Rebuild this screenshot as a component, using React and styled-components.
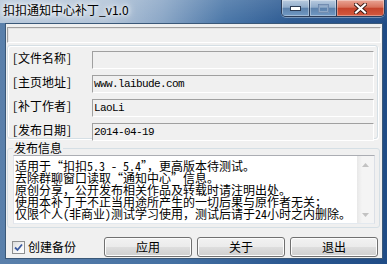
import React from "react";
import styled, { createGlobalStyle } from "styled-components";

const UI = `"Noto Sans CJK SC", "Noto Sans", sans-serif`;

const GlobalStyle = createGlobalStyle`
  html, body { margin: 0; padding: 0; background: #fff; }
  #root { width: 387px; height: 264px; }
  * { box-sizing: border-box; }
`;

const Window = styled.div`
  width: 387px;
  height: 264px;
  display: flex;
  flex-direction: column;
  overflow: hidden;
  font-family: ${UI};
  background: linear-gradient(90deg, #5a80ab 0%, #4470a2 45%, #2a5790 75%, #204c86 100%);
`;

const TitleBar = styled.div`
  flex: none;
  height: 23px;
  display: flex;
  align-items: flex-start;
  justify-content: space-between;
  padding: 0 2px 0 3px;
  background:
    linear-gradient(180deg, rgba(255,255,255,0.12) 0%, rgba(255,255,255,0) 100%),
    linear-gradient(90deg, #b7c8db 0%, #b2c4d8 28%, #8aa6c6 42%, #4b77a8 58%, #2c5a92 75%, #214d87 100%);
`;

const Title = styled.div`
  font-size: 12px;
  line-height: 19px;
  color: #000;
  white-space: nowrap;
  text-shadow: 0 0 4px #fff, 0 0 7px #fff, 0 0 10px rgba(255,255,255,0.9);
`;

const CaptionButtons = styled.div`
  display: flex;
  height: 17px;
  border: 1px solid #2c3e5b;
  border-top: none;
  border-radius: 0 0 5px 5px;
  overflow: hidden;
  box-shadow: 0 1px 0 rgba(255,255,255,0.35);
`;

const CapBtn = styled.div`
  width: ${(p) => (p.$close ? "48px" : "27px")};
  height: 100%;
  display: flex;
  align-items: center;
  justify-content: center;
  border-left: ${(p) => (p.$first ? "none" : "1px solid #2c3e5b")};
  box-shadow: inset 0 0 0 1px rgba(255,255,255,0.35);
  background: ${(p) =>
    p.$close
      ? "linear-gradient(180deg, #e9a595 0%, #d8725c 45%, #c5442c 52%, #d35a40 100%)"
      : "linear-gradient(180deg, #b9cbe0 0%, #91acca 45%, #5d82ac 52%, #7199c4 100%)"};
`;

const Client = styled.div`
  flex: 1;
  margin: 0 4px 5px 5px;
  border: 1px solid #3a5878;
  background: #f0f0f0;
  display: flex;
  flex-direction: column;
  padding: 3px 1px 0 1px;
`;

const TopBar = styled.div`
  height: 16px;
  border: 1px solid;
  border-color: #a0a0a0 #ffffff #ffffff #a0a0a0;
  box-shadow: inset 1px 1px 0 #e3e3e3;
  background: #f0f0f0;
`;

const FieldsGroup = styled.div`
  margin: 2px 3px 0 0;
  height: 94px;
  border: 1px solid #d5dfe5;
  border-radius: 3px;
  box-shadow: inset 1px 1px 0 #fff, 1px 1px 0 #fff;
  padding: 5px 3px 0 4px;
`;

const Row = styled.div`
  display: grid;
  grid-template-columns: 80px 1fr;
  height: 24px;
  align-items: start;
`;

const Label = styled.div`
  font-size: 12px;
  line-height: 13px;
  color: #000;
  white-space: nowrap;
  font-feature-settings: "hwid" 1;
`;

const Field = styled.div`
  height: 18px;
  border: 1px solid;
  border-color: #a0a0a0 #ffffff #ffffff #a0a0a0;
  background: #f0f0f0;
  padding-left: 1px;
  font-family: "Liberation Mono", monospace;
  font-size: 11px;
  letter-spacing: -0.6px;
  line-height: 16px;
  color: #000;
  white-space: nowrap;
`;

const InfoGroup = styled.fieldset`
  margin: 2px 1px 0 0;
  padding: 0 4px 3px 5px;
  border: 1px solid #d5dfe5;
  border-radius: 3px;
  min-width: 0;
`;

const Legend = styled.legend`
  font-size: 12px;
  line-height: 14px;
  padding: 0 1px;
  color: #000;
`;

const TextBox = styled.div`
  height: 69px;
  display: flex;
  border: 1px solid;
  border-color: #abadb3 #dbdfe6 #e3e9ef #e2e3ea;
  background: #fff;
`;

const TextBody = styled.div`
  flex: 1;
  padding: 4px 0 0 1px;
  font-size: 12px;
  line-height: 12px;
  color: #000;
  white-space: pre;
  overflow: hidden;
`;

const TextLine = styled.div`
  height: 12px;
`;

const Run = styled.span`
  font-feature-settings: ${(p) => (p.$kind === "half" ? '"hwid" 1' : p.$kind === "wide" ? '"fwid" 1' : "normal")};
`;

const ScrollBar = styled.div`
  width: 17px;
  display: flex;
  flex-direction: column;
  justify-content: space-between;
  background: linear-gradient(90deg, #e8e8e8 0%, #f4f4f4 30%, #f4f4f4 100%);
`;

const ScrollArrow = styled.div`
  height: 17px;
  display: flex;
  align-items: center;
  justify-content: center;
`;

const BottomRow = styled.div`
  margin-top: 9px;
  height: 20px;
  display: flex;
  align-items: center;
  justify-content: space-between;
  padding: 0 3px 0 5px;
`;

const CheckLabel = styled.label`
  display: flex;
  align-items: center;
  gap: 3px;
  font-size: 12px;
  line-height: 14px;
  color: #000;
`;

const CheckBox = styled.span`
  width: 13px;
  height: 13px;
  border: 1px solid #8e8f8f;
  background: linear-gradient(135deg, #dcdcdc 0%, #f6f6f6 60%, #ffffff 100%);
  display: flex;
  align-items: center;
  justify-content: center;
`;

const Buttons = styled.div`
  display: flex;
  gap: 5px;
`;

const Button = styled.div`
  width: 88px;
  height: 20px;
  border: 1px solid #707070;
  border-radius: 3px;
  box-shadow: inset 0 0 0 1px #fcfcfc;
  background: linear-gradient(180deg, #f2f2f2 0%, #ebebeb 48%, #dddddd 52%, #cfcfcf 100%);
  display: flex;
  align-items: center;
  justify-content: center;
  font-size: 12px;
  line-height: 14px;
  color: #000;
`;

const rows = [
  { label: "[文件名称]", value: "" },
  { label: "[主页地址]", value: "www.laibude.com" },
  { label: "[补丁作者]", value: "LaoLi" },
  { label: "[发布日期]", value: "2014-04-19" },
];

const info = [
  "适用于“扣扣5.3 - 5.4”，更高版本待测试。",
  "去除群聊窗口读取“通知中心”信息。",
  "原创分享，公开发布相关作品及转载时请注明出处。",
  "使用本补丁于不正当用途所产生的一切后果与原作者无关；",
  "仅限个人(非商业)测试学习使用，测试后请于24小时之内删除。",
];

function splitRuns(text) {
  const runs = [];
  for (const ch of text) {
    const kind = /[\x20-\x7e]/.test(ch) ? "half" : ch === "“" || ch === "”" ? "wide" : "cjk";
    const last = runs[runs.length - 1];
    if (last && last.kind === kind) last.text += ch;
    else runs.push({ kind, text: ch });
  }
  return runs;
}

export default function App() {
  return (
    <>
      <GlobalStyle />
      <Window>
        <TitleBar>
          <Title>扣扣通知中心补丁_v1.0</Title>
          <CaptionButtons>
            <CapBtn $first>
              <svg width="11" height="5" viewBox="0 0 11 5">
                <rect x="0.5" y="0.5" width="10" height="4" fill="#fff" stroke="#2d3c55" />
              </svg>
            </CapBtn>
            <CapBtn>
              <svg width="11" height="9" viewBox="0 0 11 9">
                <rect x="1" y="1" width="9" height="7" fill="none" stroke="#8ea6c4" strokeWidth="2" />
                <rect x="0.5" y="0.5" width="10" height="8" fill="none" stroke="#5f7ea6" strokeWidth="0.6" />
              </svg>
            </CapBtn>
            <CapBtn $close>
              <svg width="13" height="11" viewBox="0 0 13 11">
                <path d="M2 1.5 L11 9.5 M11 1.5 L2 9.5" stroke="#3a1a14" strokeWidth="4" strokeLinecap="square" />
                <path d="M2 1.5 L11 9.5 M11 1.5 L2 9.5" stroke="#fff" strokeWidth="2.2" strokeLinecap="square" />
              </svg>
            </CapBtn>
          </CaptionButtons>
        </TitleBar>
        <Client>
          <TopBar />
          <FieldsGroup>
            {rows.map((r) => (
              <Row key={r.label}>
                <Label>{r.label}</Label>
                <Field>{r.value}</Field>
              </Row>
            ))}
          </FieldsGroup>
          <InfoGroup>
            <Legend>发布信息</Legend>
            <TextBox>
              <TextBody>
                {info.map((line, i) => (
                  <TextLine key={i}>
                    {splitRuns(line).map((r, j) => (
                      <Run key={j} $kind={r.kind}>
                        {r.text}
                      </Run>
                    ))}
                  </TextLine>
                ))}
              </TextBody>
              <ScrollBar>
                <ScrollArrow>
                  <svg width="7" height="4" viewBox="0 0 7 4">
                    <path d="M0 4 L3.5 0 L7 4 Z" fill="#c2c2c2" />
                  </svg>
                </ScrollArrow>
                <ScrollArrow>
                  <svg width="7" height="4" viewBox="0 0 7 4">
                    <path d="M0 0 L3.5 4 L7 0 Z" fill="#c2c2c2" />
                  </svg>
                </ScrollArrow>
              </ScrollBar>
            </TextBox>
          </InfoGroup>
          <BottomRow>
            <CheckLabel>
              <CheckBox>
                <svg width="9" height="9" viewBox="0 0 9 9">
                  <path d="M1 4.5 L3.5 7 L8 1.5" fill="none" stroke="#3b5aa0" strokeWidth="1.8" />
                </svg>
              </CheckBox>
              创建备份
            </CheckLabel>
            <Buttons>
              <Button>应用</Button>
              <Button>关于</Button>
              <Button>退出</Button>
            </Buttons>
          </BottomRow>
        </Client>
      </Window>
    </>
  );
}
